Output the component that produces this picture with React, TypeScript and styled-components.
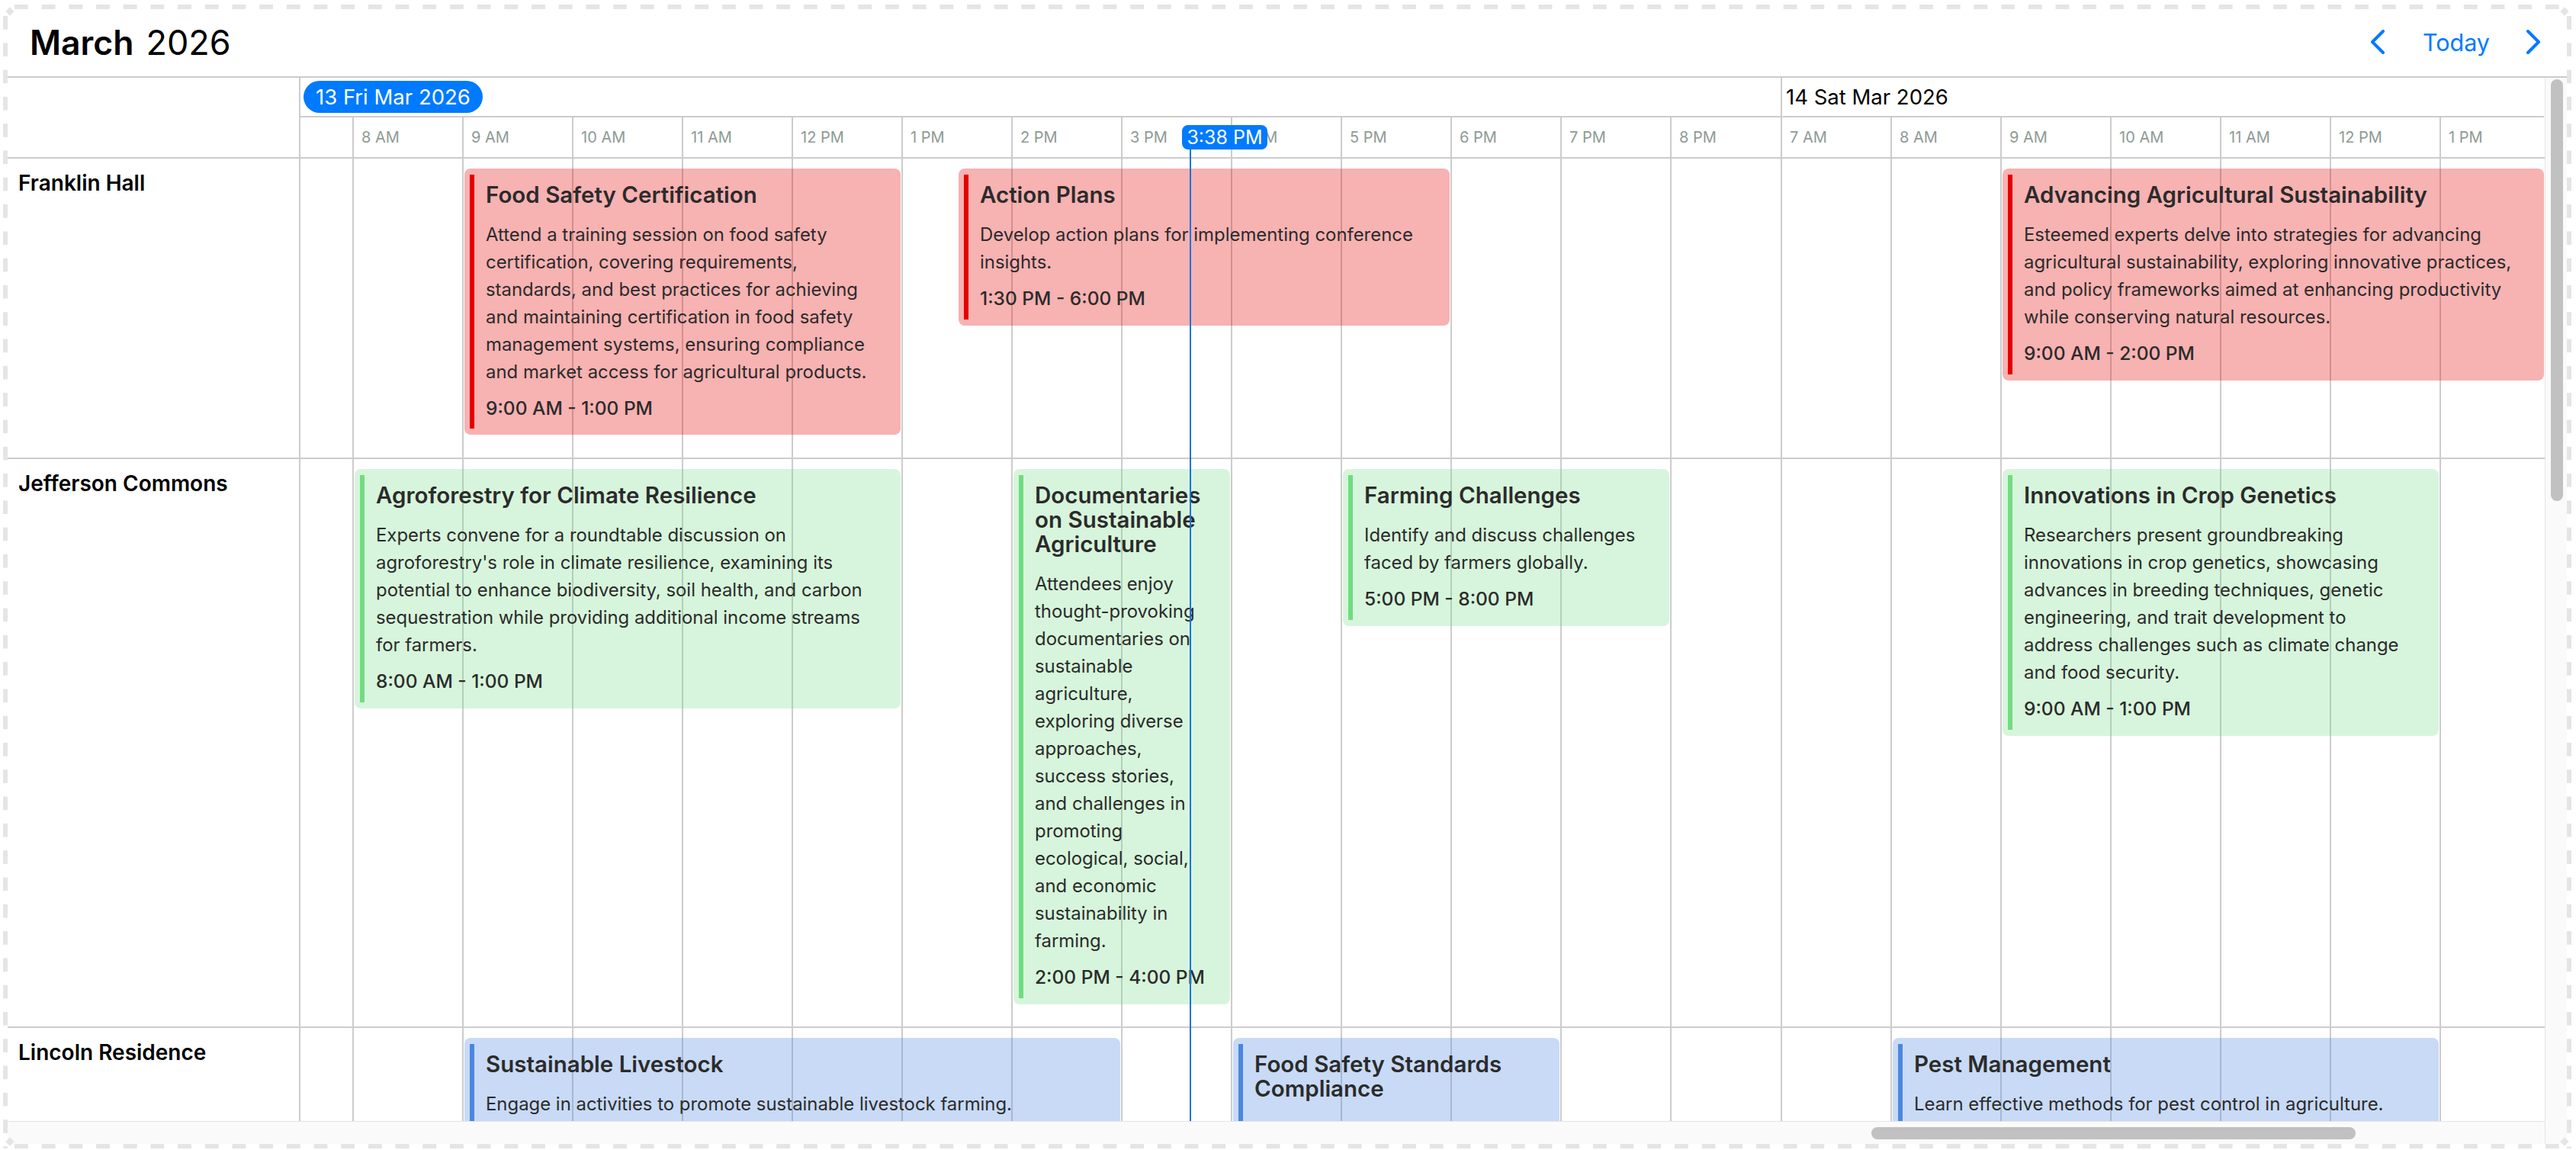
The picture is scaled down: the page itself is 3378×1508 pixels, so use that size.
import React from 'react'
import styled, { createGlobalStyle } from 'styled-components'

const GlobalStyle = createGlobalStyle`
  html, body {
    margin: 0;
    padding: 0;
    background: #fff;
  }
  body {
    font-family: Inter, "Noto Sans", sans-serif;
    overflow: hidden;
  }
`

const LINE = '#cccccc'
const BLUE = '#007aff'
const HOUR = 144
const TRACK_START = 394
const FRI_8AM = 462
const SAT_7AM = 2335

const Frame = styled.div`
  position: relative;
  box-sizing: border-box;
  width: 3368px;
  height: 1500px;
  margin: 6px 0 0 4px;
  padding: 6px;
  background:
    linear-gradient(90deg, #e5e5e5 18px, transparent 0) 15px 0 / 35.7px 6px repeat-x,
    linear-gradient(90deg, #e5e5e5 18px, transparent 0) 15px 100% / 35.7px 6px repeat-x,
    linear-gradient(180deg, #e5e5e5 18px, transparent 0) 0 15px / 6px 35.3px repeat-y,
    linear-gradient(180deg, #e5e5e5 18px, transparent 0) 100% 15px / 6px 35.3px repeat-y;
`

const Corner = styled.i<{ $x: 'left' | 'right'; $y: 'top' | 'bottom' }>`
  position: absolute;
  ${p => p.$x}: 5px;
  ${p => p.$y}: 5px;
  width: 8px;
  height: 8px;
  background: #e5e5e5;
  transform: rotate(45deg);
`

const Panel = styled.div`
  display: flex;
  flex-direction: column;
  height: 100%;
  background: #fff;
  overflow: hidden;
`

const Toolbar = styled.header`
  display: flex;
  align-items: center;
  justify-content: space-between;
  flex: none;
  box-sizing: border-box;
  height: 90px;
  padding: 0 34px 2px 29px;
  border-bottom: 2px solid ${LINE};
`

const Title = styled.h1`
  margin: 0;
  font-size: 45px;
  font-weight: 400;
  color: #000;
  b {
    font-size: 44.5px;
    font-weight: 600;
    margin-right: 16px;
  }
`

const Nav = styled.nav`
  display: flex;
  align-items: center;
`

const NavButton = styled.button`
  display: flex;
  padding: 0;
  border: 0;
  background: none;
  color: ${BLUE};
  font: 400 30.5px Inter, sans-serif;
`

const Today = styled(NavButton)`
  margin: 0 47px 0 49px;
`

const Body = styled.div`
  display: flex;
  flex: 1;
  min-height: 0;
`

const Main = styled.div`
  display: flex;
  flex-direction: column;
  flex: 1;
  min-width: 0;
`

const Viewport = styled.div`
  position: relative;
  flex: 1;
  min-height: 0;
  overflow: hidden;
`

const HeaderRow = styled.div`
  display: flex;
  height: 106px;
  box-sizing: border-box;
  border-bottom: 2px solid ${LINE};
`

const Row = styled.div<{ $height: number }>`
  display: flex;
  box-sizing: border-box;
  height: ${p => p.$height}px;
  border-bottom: 2px solid ${LINE};
`

const Resource = styled.div`
  flex: none;
  box-sizing: border-box;
  width: 384px;
  padding: 14px 0 0 14px;
  border-right: 2px solid ${LINE};
  font-size: 28px;
  line-height: 36px;
  font-weight: 600;
  color: #000;
`

const Track = styled.div`
  position: relative;
  display: flex;
  flex: 1;
  min-width: 0;
`

const Day = styled.div<{ $width: number }>`
  flex: none;
  width: ${p => p.$width}px;
`

const DateCell = styled.div<{ $first?: boolean }>`
  display: flex;
  align-items: center;
  box-sizing: border-box;
  height: 52px;
  padding-left: ${p => (p.$first ? 4 : 5)}px;
  border-bottom: 2px solid ${LINE};
  border-left: ${p => (p.$first ? 0 : `2px solid ${LINE}`)};
  font-size: 27.5px;
  color: #000;
`

const DatePill = styled.span`
  display: flex;
  align-items: center;
  box-sizing: border-box;
  height: 42px;
  padding: 0 16px;
  border-radius: 21px;
  background: ${BLUE};
  color: #fff;
`

const Hours = styled.div`
  display: flex;
  height: 52px;
`

const HourCell = styled.div<{ $width: number; $noLine?: boolean }>`
  flex: none;
  box-sizing: border-box;
  width: ${p => p.$width}px;
  height: 100%;
  border-left: ${p => (p.$noLine ? 0 : `2px solid ${LINE}`)};
  padding: 13px 0 0 10px;
  font-size: 20px;
  line-height: 26px;
  color: #8e9a96;
`

const Event = styled.article<{ $kind: keyof typeof kinds; $height: number }>`
  position: absolute;
  top: 13px;
  display: flex;
  box-sizing: border-box;
  height: ${p => p.$height}px;
  padding: 8px 8px 8px 7px;
  border-radius: 8px;
  background: ${p => kinds[p.$kind].bg};
  color: #2b2b2b;
  &::before {
    content: '';
    flex: none;
    width: 6px;
    margin-right: 15px;
    background: ${p => kinds[p.$kind].bar};
  }
`

const kinds = {
  red: { bar: '#e50000', bg: 'rgba(229, 0, 0, 0.3)' },
  green: { bar: '#70dc80', bg: 'rgba(112, 220, 128, 0.28)' },
  blue: { bar: '#4c86e0', bg: 'rgba(76, 134, 224, 0.31)' },
}

const EventBody = styled.div`
  padding: 10px 0 12px;
  white-space: pre-line;
`

const EventTitle = styled.div`
  font-size: 29.5px;
  line-height: 32px;
  font-weight: 600;
  margin-bottom: 19px;
`

const EventText = styled.div`
  font-size: 23.9px;
  line-height: 36px;
  margin-bottom: 13px;
`

const EventTime = styled.div`
  font-size: 24.5px;
  line-height: 32px;
  font-weight: 500;
`

const NowLine = styled.div`
  position: absolute;
  top: 94px;
  bottom: 0;
  left: 1550px;
  width: 2px;
  background: #1574e0;
`

const NowPill = styled.div`
  position: absolute;
  top: 62px;
  left: 1540px;
  display: flex;
  align-items: center;
  justify-content: center;
  width: 112px;
  height: 32px;
  border-radius: 8px;
  background: ${BLUE};
  color: #fff;
  font-size: 25px;
`

const HTrack = styled.div`
  flex: none;
  box-sizing: border-box;
  height: 30px;
  padding: 7px 0 0 2444px;
  border-top: 1px solid #e5e5e5;
  background: #fafafa;
`

const HThumb = styled.div`
  width: 635px;
  height: 16px;
  border-radius: 8px;
  background: #c1c1c1;
`

const VTrack = styled.div`
  flex: none;
  box-sizing: border-box;
  width: 29px;
  padding: 2px 0 0 7px;
  border-left: 1px solid #e5e5e5;
  background: #fafafa;
`

const VThumb = styled.div`
  width: 16px;
  height: 553px;
  border-radius: 8px;
  background: #c1c1c1;
`

const Chevron = ({ dir }: { dir: 'left' | 'right' }) => (
  <svg width="20" height="32" viewBox="0 0 20 32" fill="none" stroke="currentColor" strokeWidth="4" strokeLinecap="round" strokeLinejoin="round">
    <path d={dir === 'left' ? 'M17 2 3 16l14 14' : 'M3 2l14 14L3 30'} />
  </svg>
)

const friHours = ['8 AM', '9 AM', '10 AM', '11 AM', '12 PM', '1 PM', '2 PM', '3 PM', '4 PM', '5 PM', '6 PM', '7 PM', '8 PM']
const satHours = ['7 AM', '8 AM', '9 AM', '10 AM', '11 AM', '12 PM']

// x of an hour on the track, day 0 is Friday and day 1 is Saturday
const hourX = (day: number, h: number) =>
  (day === 0 ? FRI_8AM + (h - 8) * HOUR : SAT_7AM + (h - 7) * HOUR) - TRACK_START

type Item = {
  kind: keyof typeof kinds
  day: number
  from: number
  to: number
  title: string
  text: string
  time: string
  height: number
}

const rows: { name: string; height: number; items: Item[] }[] = [
  {
    name: 'Franklin Hall',
    height: 394,
    items: [
      {
        kind: 'red', day: 0, from: 9, to: 13, height: 349,
        title: 'Food Safety Certification',
        text: 'Attend a training session on food safety\ncertification, covering requirements,\nstandards, and best practices for achieving\nand maintaining certification in food safety\nmanagement systems, ensuring compliance\nand market access for agricultural products.',
        time: '9:00 AM - 1:00 PM',
      },
      {
        kind: 'red', day: 0, from: 13.5, to: 18, height: 206,
        title: 'Action Plans',
        text: 'Develop action plans for implementing conference\ninsights.',
        time: '1:30 PM - 6:00 PM',
      },
      {
        kind: 'red', day: 1, from: 9, to: 14, height: 278,
        title: 'Advancing Agricultural Sustainability',
        text: 'Esteemed experts delve into strategies for advancing\nagricultural sustainability, exploring innovative practices,\nand policy frameworks aimed at enhancing productivity\nwhile conserving natural resources.',
        time: '9:00 AM - 2:00 PM',
      },
    ],
  },
  {
    name: 'Jefferson Commons',
    height: 746,
    items: [
      {
        kind: 'green', day: 0, from: 8, to: 13, height: 314,
        title: 'Agroforestry for Climate Resilience',
        text: "Experts convene for a roundtable discussion on\nagroforestry's role in climate resilience, examining its\npotential to enhance biodiversity, soil health, and carbon\nsequestration while providing additional income streams\nfor farmers.",
        time: '8:00 AM - 1:00 PM',
      },
      {
        kind: 'green', day: 0, from: 14, to: 16, height: 702,
        title: 'Documentaries\non Sustainable\nAgriculture',
        text: 'Attendees enjoy\nthought-provoking\ndocumentaries on\nsustainable\nagriculture,\nexploring diverse\napproaches,\nsuccess stories,\nand challenges in\npromoting\necological, social,\nand economic\nsustainability in\nfarming.',
        time: '2:00 PM - 4:00 PM',
      },
      {
        kind: 'green', day: 0, from: 17, to: 20, height: 206,
        title: 'Farming Challenges',
        text: 'Identify and discuss challenges\nfaced by farmers globally.',
        time: '5:00 PM - 8:00 PM',
      },
      {
        kind: 'green', day: 1, from: 9, to: 13, height: 350,
        title: 'Innovations in Crop Genetics',
        text: 'Researchers present groundbreaking\ninnovations in crop genetics, showcasing\nadvances in breeding techniques, genetic\nengineering, and trait development to\naddress challenges such as climate change\nand food security.',
        time: '9:00 AM - 1:00 PM',
      },
    ],
  },
  {
    name: 'Lincoln Residence',
    height: 400,
    items: [
      {
        kind: 'blue', day: 0, from: 9, to: 15, height: 206,
        title: 'Sustainable Livestock',
        text: 'Engage in activities to promote sustainable livestock farming.',
        time: '9:00 AM - 3:00 PM',
      },
      {
        kind: 'blue', day: 0, from: 16, to: 19, height: 280,
        title: 'Food Safety Standards\nCompliance',
        text: 'Learn about food safety standards',
        time: '4:00 PM - 7:00 PM',
      },
      {
        kind: 'blue', day: 1, from: 8, to: 13, height: 206,
        title: 'Pest Management',
        text: 'Learn effective methods for pest control in agriculture.',
        time: '8:00 AM - 1:00 PM',
      },
    ],
  },
]

const GridCells = () => (
  <>
    <HourCell $width={68} $noLine />
    {friHours.map((h, i) => <HourCell key={`f${h}`} $width={i === friHours.length - 1 ? HOUR + 1 : HOUR} />)}
    {satHours.map(h => <HourCell key={`s${h}`} $width={HOUR} />)}
    <HourCell $width={137} />
  </>
)

export default function App () {
  return (
    <>
      <GlobalStyle />
      <Frame>
        <Corner $x="left" $y="top" />
        <Corner $x="right" $y="top" />
        <Corner $x="left" $y="bottom" />
        <Corner $x="right" $y="bottom" />
        <Panel>
          <Toolbar>
            <Title><b>March</b>2026</Title>
            <Nav>
              <NavButton aria-label="Previous"><Chevron dir="left" /></NavButton>
              <Today>Today</Today>
              <NavButton aria-label="Next"><Chevron dir="right" /></NavButton>
            </Nav>
          </Toolbar>
          <Body>
            <Main>
              <Viewport>
                <HeaderRow>
                  <Resource />
                  <Track>
                    <Day $width={1941}>
                      <DateCell $first><DatePill>13 Fri Mar 2026</DatePill></DateCell>
                      <Hours>
                        <HourCell $width={68} $noLine />
                        {friHours.map(h => <HourCell key={h} $width={HOUR}>{h}</HourCell>)}
                      </Hours>
                    </Day>
                    <Day $width={1001}>
                      <DateCell>14 Sat Mar 2026</DateCell>
                      <Hours>
                        {satHours.map(h => <HourCell key={h} $width={HOUR}>{h}</HourCell>)}
                        <HourCell $width={137}>1 PM</HourCell>
                      </Hours>
                    </Day>
                  </Track>
                </HeaderRow>
                {rows.map(row => (
                  <Row key={row.name} $height={row.height}>
                    <Resource>{row.name}</Resource>
                    <Track>
                      <GridCells />
                      {row.items.map(item => {
                        const left = hourX(item.day, item.from) + 3
                        const right = Math.min(hourX(item.day, item.to) - 1, 2942)
                        return (
                          <Event
                            key={item.title}
                            $kind={item.kind}
                            $height={item.height}
                            style={{ left, width: right - left }}
                          >
                            <EventBody>
                              <EventTitle>{item.title}</EventTitle>
                              <EventText>{item.text}</EventText>
                              <EventTime>{item.time}</EventTime>
                            </EventBody>
                          </Event>
                        )
                      })}
                    </Track>
                  </Row>
                ))}
                <NowLine />
                <NowPill>3:38 PM</NowPill>
              </Viewport>
              <HTrack><HThumb /></HTrack>
            </Main>
            <VTrack><VThumb /></VTrack>
          </Body>
        </Panel>
      </Frame>
    </>
  )
}
